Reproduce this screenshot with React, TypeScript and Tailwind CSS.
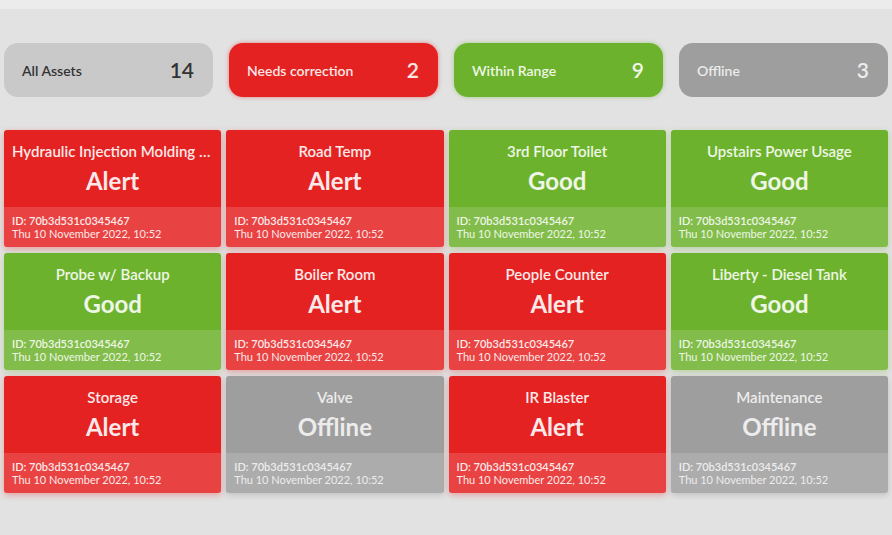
import React from 'react';

type Status = 'alert' | 'good' | 'offline';

const assets: { name: string; status: Status }[] = [
  { name: 'Hydraulic Injection Molding Machine', status: 'alert' },
  { name: 'Road Temp', status: 'alert' },
  { name: '3rd Floor Toilet', status: 'good' },
  { name: 'Upstairs Power Usage', status: 'good' },
  { name: 'Probe w/ Backup', status: 'good' },
  { name: 'Boiler Room', status: 'alert' },
  { name: 'People Counter', status: 'alert' },
  { name: 'Liberty - Diesel Tank', status: 'good' },
  { name: 'Storage', status: 'alert' },
  { name: 'Valve', status: 'offline' },
  { name: 'IR Blaster', status: 'alert' },
  { name: 'Maintenance', status: 'offline' },
];

const cardStyles: Record<Status, { bg: string; text: string; label: string }> = {
  alert: { bg: 'bg-[#e52222] shadow-[0_2px_6px_rgba(229,34,34,0.35)]', text: 'text-[#fbe9e9]', label: 'Alert' },
  good: { bg: 'bg-[#6db22c] shadow-[0_2px_6px_rgba(109,178,44,0.35)]', text: 'text-[#eef6e6]', label: 'Good' },
  offline: { bg: 'bg-[#9e9e9e] shadow-[0_2px_6px_rgba(0,0,0,0.15)]', text: 'text-[#ececec]', label: 'Offline' },
};

const pills = [
  { label: 'All Assets', count: 14, cls: 'bg-[#c9c9c9] text-[#333333]' },
  { label: 'Needs correction', count: 2, cls: 'bg-[#e52222] text-[#fbe6e6] shadow-[0_0_4px_rgba(229,34,34,0.5)]' },
  { label: 'Within Range', count: 9, cls: 'bg-[#6db22c] text-[#eef6e6] shadow-[0_0_4px_rgba(109,178,44,0.5)]' },
  { label: 'Offline', count: 3, cls: 'bg-[#9e9e9e] text-[#ececec]' },
];

const AssetCard: React.FC<{ name: string; status: Status }> = ({ name, status }) => {
  const s = cardStyles[status];
  return (
    <div className={`flex h-[117px] flex-col overflow-hidden rounded-[3px] ${s.bg} ${s.text}`}>
      <div className="flex h-[77px] flex-col items-center px-2 pt-[12px]">
        <div className="w-full truncate text-center text-[15px] font-semibold leading-[18px]">{name}</div>
        <div className="mt-[7px] text-[24px] font-bold leading-[28px]">{s.label}</div>
      </div>
      <div className="flex flex-1 flex-col bg-white/15 px-2 pt-[7px] text-[11px] leading-[13px]">
        <span className="font-semibold">ID: 70b3d531c0345467</span>
        <span>Thu 10 November 2022, 10:52</span>
      </div>
    </div>
  );
};

export default function App() {
  return (
    <div className="h-[535px] w-[892px] overflow-hidden bg-[#e2e2e2] font-['Lato','Noto_Sans',sans-serif]">
      <div className="h-[9px] bg-[#ececec]" />
      <div className="grid grid-cols-4 gap-x-[16px] px-[4px] pt-[34px]">
        {pills.map((p) => (
          <div key={p.label} className={`flex h-[54px] items-center justify-between rounded-[14px] pl-[18px] pr-[19px] ${p.cls}`}>
            <span className="text-[14px] font-semibold">{p.label}</span>
            <span className="text-[21px] font-semibold">{p.count}</span>
          </div>
        ))}
      </div>
      <div className="mt-[33px] grid grid-cols-4 gap-x-[5px] gap-y-[6px] px-[4px]">
        {assets.map((a) => (
          <AssetCard key={a.name} name={a.name} status={a.status} />
        ))}
      </div>
    </div>
  );
}
